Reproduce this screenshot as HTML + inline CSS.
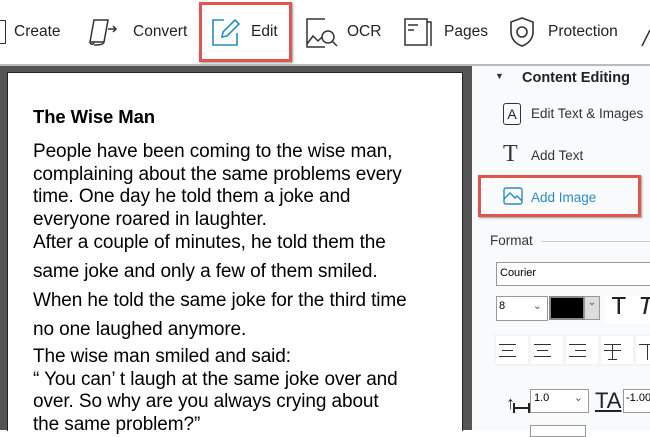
<!DOCTYPE html><html><head><style>
body{margin:0;width:650px;height:430px;overflow:hidden;background:#fff;font-family:"Liberation Sans",Arial,sans-serif;position:relative}
.a{position:absolute}
.tb{font-size:15.5px;color:#222;top:23px}
.doc{font-size:19px;color:#000;left:33px;white-space:nowrap;line-height:22.5px;letter-spacing:-0.1px}
.pn{font-size:13.5px;color:#333}
.box{position:absolute;background:#fff;border:1px solid #999}
.al{position:absolute;width:20px;height:28px;background:#fff}
.al i{position:absolute;left:3px;width:17px;height:1.3px;background:#333}
</style></head><body>
<div class="a" style="left:0;top:64px;width:650px;height:2px;background:#bbb"></div>
<div class="a" style="left:-6px;top:20px;width:10px;height:22px;border:1.5px solid #333"></div>
<div class="a tb" style="left:14px">Create</div>
<svg class="a" style="left:86px;top:16px" width="32" height="32" viewBox="0 0 32 32" fill="none" stroke="#333" stroke-width="1.5"><path d="M8 4h14l-4 22H4z M4 26c0 3 4 3 4 0 M18 26c0 2-3 3-10 3"/><path d="M22 13h8M27 10l3 3-3 3"/></svg>
<div class="a tb" style="left:133px">Convert</div>
<div class="a" style="left:199px;top:2px;width:93px;height:60px;border:3px solid #e0564e;box-sizing:border-box;box-shadow:1px 1px 2px #999"></div>
<svg class="a" style="left:210px;top:16px" width="32" height="32" viewBox="0 0 32 32" fill="none" stroke="#2a8cc0" stroke-width="1.6"><path d="M14 4H3v25h24V17"/><path d="M12 21l1-5L25 4l4 4-12 12z"/></svg>
<div class="a tb" style="left:251px">Edit</div>
<svg class="a" style="left:305px;top:16px" width="34" height="34" viewBox="0 0 34 34" fill="none" stroke="#333" stroke-width="1.5"><path d="M20 3H2v28h18"/><path d="M2 28l6-8 5 5 4-4"/><circle cx="23" cy="21" r="6"/><path d="M27 25l5 5"/></svg>
<div class="a tb" style="left:347px">OCR</div>
<svg class="a" style="left:403px;top:16px" width="30" height="32" viewBox="0 0 30 32" fill="none" stroke="#333" stroke-width="1.5"><path d="M2 3h22v26H2z"/><path d="M24 6h4v24"/><path d="M5 9h10M5 14h6"/></svg>
<div class="a tb" style="left:444px">Pages</div>
<svg class="a" style="left:508px;top:16px" width="28" height="32" viewBox="0 0 28 32" fill="none" stroke="#333" stroke-width="1.6"><path d="M14 2l11 4v10c0 7-5 12-11 14C8 28 3 23 3 16V6z"/><circle cx="14" cy="16" r="5"/></svg>
<div class="a tb" style="left:548px">Protection</div>
<svg class="a" style="left:640px;top:26px" width="12" height="22"><path d="M2 20L10 4" stroke="#333" stroke-width="1.5"/></svg>
<div class="a" style="left:0;top:66px;width:472px;height:364px;background:#555"></div>
<div class="a" style="left:7px;top:72px;width:454px;height:358px;background:#fff;border-left:1px solid #222;border-top:1px solid #222;border-right:1px solid #222"></div>
<div class="a doc" style="top:106px;font-weight:bold;font-size:18.5px">The Wise Man</div>
<div class="a doc" style="top:141px">People have been coming to the wise man,<br>complaining about the same problems every<br>time. One day he told them a joke and<br>everyone roared in laughter.</div>
<div class="a doc" style="top:232px">After a couple of minutes, he told them the</div>
<div class="a doc" style="top:261px">same joke and only a few of them smiled.</div>
<div class="a doc" style="top:290px">When he told the same joke for the third time</div>
<div class="a doc" style="top:319px">no one laughed anymore.</div>
<div class="a doc" style="top:346px">The wise man smiled and said:<br>“ You can’ t laugh at the same joke over and<br>over. So why are you always crying about<br>the same problem?”</div>
<div class="a" style="left:472px;top:66px;width:178px;height:364px;background:#f9fafb"></div>
<div class="a" style="left:495px;top:71px;font-size:9px;color:#333">▼</div>
<div class="a pn" style="left:522px;top:70px;font-weight:bold;font-size:14.5px;color:#222">Content Editing</div>
<div class="a" style="left:503px;top:103px;width:16px;height:20px;border:1.5px solid #333;border-radius:3px;font-size:14px;text-align:center;line-height:20px;color:#222">A</div>
<div class="a pn" style="left:531px;top:106px">Edit Text &amp; Images</div>
<div class="a" style="left:503px;top:142px;font-size:24px;font-family:'Liberation Serif',serif;color:#333;line-height:24px">T</div>
<div class="a pn" style="left:531px;top:148px">Add Text</div>
<div class="a" style="left:478px;top:175px;width:163px;height:42px;border:3px solid #e0564e;box-sizing:border-box;box-shadow:1px 1px 2px #999;background:#fafbfc"></div>
<svg class="a" style="left:503px;top:187px" width="20" height="18" viewBox="0 0 20 18" fill="none" stroke="#2a8cc0" stroke-width="1.4"><rect x="1" y="1" width="18" height="16" rx="2"/><path d="M1 12l6-6 5 5 2-2 5 5"/></svg>
<div class="a pn" style="left:531px;top:190px;color:#2a8cc0">Add Image</div>
<div class="a pn" style="left:490px;top:233px">Format</div>
<div class="a" style="left:541px;top:241px;width:109px;height:1px;background:#ccc"></div>
<div class="box" style="left:496px;top:262px;width:160px;height:22px;font-size:11px;line-height:20px;padding-left:3px">Courier</div>
<div class="box" style="left:496px;top:296px;width:48px;height:23px;font-size:11px;line-height:18px;padding-left:2px">8<span style="position:absolute;right:5px;color:#555">⌄</span></div>
<div class="a" style="left:549px;top:296px;width:32px;height:20px;background:#000;border:2px solid #888"></div>
<div class="a" style="left:584px;top:296px;width:14px;height:22px;background:#ddd;border:1px solid #999;font-size:10px;color:#555;text-align:center">⌄</div>
<div class="a" style="left:605px;top:296px;width:45px;height:28px;background:#fff"></div>
<div class="a" style="left:611px;top:292px;font-size:26px;font-family:'Liberation Mono',monospace;color:#222">T</div>
<div class="a" style="left:638px;top:292px;font-size:26px;font-family:'Liberation Mono',monospace;font-style:italic;color:#222">T</div>
<div class="a" style="left:494px;top:334px;width:156px;height:32px;background:#f3f4f5"></div>
<div class="al" style="left:496px;top:336px;width:32px"><i style="top:8px"></i><i style="top:14px;width:11px;left:6px"></i><i style="top:20px"></i></div>
<div class="al" style="left:531px;top:336px;width:32px"><i style="top:8px"></i><i style="top:14px;width:11px;left:6px"></i><i style="top:20px"></i></div>
<div class="al" style="left:566px;top:336px;width:32px"><i style="top:8px"></i><i style="top:14px;width:11px;left:9px"></i><i style="top:20px"></i></div>
<div class="al" style="left:601px;top:336px;width:32px"><i style="top:8px"></i><i style="top:14px"></i><i style="top:8px;left:11px;width:1.3px;height:16px"></i><i style="top:23px;left:7px;width:9px"></i></div>
<div class="al" style="left:636px;top:336px;width:20px"><i style="top:8px"></i><i style="top:8px;left:11px;width:1.3px;height:16px"></i></div>
<div class="a" style="left:506px;top:393px;font-size:18px;color:#222">↑</div>
<div class="a" style="left:513px;top:403px;width:13px;height:10px;border-left:2px solid #222;border-right:2px solid #222"><div style="margin-top:4px;height:1.5px;background:#222"></div></div>
<div class="box" style="left:530px;top:389px;width:54px;height:22px;font-size:11px;line-height:16px;padding-left:3px">1.0<span style="position:absolute;right:5px;color:#555">⌄</span></div>
<div class="a" style="left:595px;top:388px;font-size:22px;color:#222;text-decoration:underline">TA</div>
<div class="box" style="left:623px;top:389px;width:40px;height:22px;font-size:11px;line-height:16px;padding-left:2px">-1.00</div>
<div class="box" style="left:530px;top:425px;width:54px;height:10px"></div>
</body></html>
